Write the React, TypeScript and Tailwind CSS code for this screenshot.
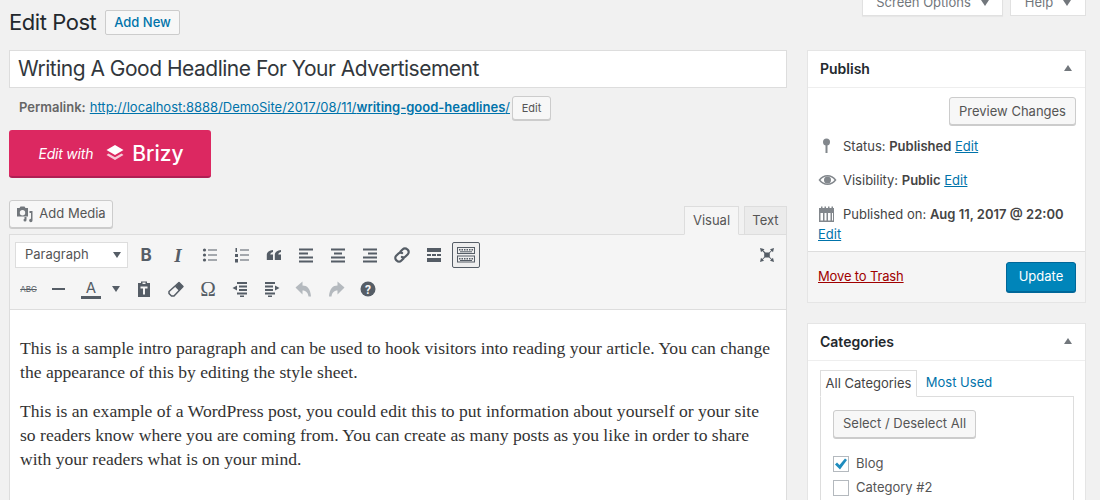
import type { ReactNode } from "react"

const ICON = "#555d66"

const Icon = ({ children, w = 20, h = 20, fill = ICON }: { children: ReactNode; w?: number; h?: number; fill?: string }) => (
	<svg width={w} height={h} viewBox={`0 0 ${w} ${h}`} fill={fill}>
		{children}
	</svg>
)

const ToolBtn = ({ children, className = "w-[32px]" }: { children: ReactNode; className?: string }) => (
	<div className={`flex h-[28px] shrink-0 items-center justify-center ${className}`}>{children}</div>
)

const Button = ({ children, className = "" }: { children: ReactNode; className?: string }) => (
	<div
		className={`flex h-[28px] shrink-0 items-center justify-center rounded-[3px] border border-[#cccccc] bg-[#f7f7f7] text-[13px] text-[#555555] shadow-[0_1px_0_#cccccc] ${className}`}
	>
		{children}
	</div>
)

const Lines = ({ rows }: { rows: [number, number][] }) => (
	<Icon>
		{rows.map(([x, w], i) => (
			<rect key={i} x={x} y={3.5 + i * 4} width={w} height={2} />
		))}
	</Icon>
)

const ToolbarRowOne = () => (
	<div className="flex h-[26px] items-center">
		<div className="mr-[2px] flex h-[26px] w-[113px] shrink-0 items-center justify-between border border-[#dddddd] bg-white pl-[9px] pr-[6px] text-[13px] text-[#555555]">
			<span>Paragraph</span>
			<span className="h-0 w-0 border-x-[4px] border-t-[6px] border-x-transparent border-t-[#555d66]" />
		</div>
		<ToolBtn>
			<span className="text-[17px] font-bold leading-none text-[#555d66]">B</span>
		</ToolBtn>
		<ToolBtn>
			<span className="font-['Liberation_Serif',serif] text-[19px] font-bold italic leading-none text-[#555d66]">I</span>
		</ToolBtn>
		<ToolBtn>
			<Icon>
				<circle cx="4.5" cy="5" r="1.6" />
				<circle cx="4.5" cy="10" r="1.6" />
				<circle cx="4.5" cy="15" r="1.6" />
				<rect x="8" y="4.5" width="9" height="1" />
				<rect x="8" y="9.5" width="9" height="1" />
				<rect x="8" y="14.5" width="9" height="1" />
			</Icon>
		</ToolBtn>
		<ToolBtn>
			<Icon>
				<rect x="3.5" y="3" width="1.5" height="4" />
				<rect x="3" y="9" width="3" height="3" />
				<rect x="3" y="14" width="3" height="3.5" />
				<rect x="8" y="4.5" width="9" height="1" />
				<rect x="8" y="9.5" width="9" height="1" />
				<rect x="8" y="14.5" width="9" height="1" />
			</Icon>
		</ToolBtn>
		<ToolBtn>
			<Icon>
				<path d="M9 5v2C6.8 7.6 6.3 8.6 6.3 9.5H9V15H2.8V10C2.8 7 5.5 5.2 9 5Z" />
				<path d="M17 5v2C14.8 7.6 14.3 8.6 14.3 9.5H17V15H10.8V10C10.8 7 13.5 5.2 17 5Z" />
			</Icon>
		</ToolBtn>
		<ToolBtn>
			<Lines rows={[[3, 14], [3, 9], [3, 14], [3, 14]]} />
		</ToolBtn>
		<ToolBtn>
			<Lines rows={[[3, 14], [6, 8], [3, 14], [3, 14]]} />
		</ToolBtn>
		<ToolBtn>
			<Lines rows={[[3, 14], [8, 9], [3, 14], [3, 14]]} />
		</ToolBtn>
		<ToolBtn>
			<Icon fill="none">
				<g stroke={ICON} strokeWidth="2.2" strokeLinecap="round">
					<path d="M8.5 6.5l2.3-2.3a3 3 0 0 1 4.3 0l.7.7a3 3 0 0 1 0 4.3l-2.3 2.3a3 3 0 0 1-3.6.5" />
					<path d="M11.5 13.5l-2.3 2.3a3 3 0 0 1-4.3 0l-.7-.7a3 3 0 0 1 0-4.3l2.3-2.3a3 3 0 0 1 3.6-.5" />
				</g>
			</Icon>
		</ToolBtn>
		<ToolBtn>
			<Icon>
				<rect x="3" y="3" width="14" height="4" />
				<rect x="3" y="9" width="4" height="2" />
				<rect x="8" y="9" width="4" height="2" />
				<rect x="13" y="9" width="4" height="2" />
				<rect x="3" y="13" width="14" height="4" />
			</Icon>
		</ToolBtn>
		<div className="ml-[2px] flex h-[26px] w-[28px] shrink-0 items-center justify-center rounded-[2px] border border-[#555d66] bg-[#eeeeee]">
			<Icon w={18} h={18}>
				<path fillRule="evenodd" d="M0 1h18v7H0ZM1 2v5h16V2ZM0 9.5h18v7H0ZM1 10.5v5h16v-5Z" />
				{[2, 4.5, 7, 9.5, 12, 14.5].map((x) => (
					<rect key={x} x={x} y="3" width="1.5" height="1.5" />
				))}
				{[2, 4.5, 7, 9.5, 12, 14.5].map((x) => (
					<rect key={x} x={x} y="12" width="1.5" height="1.5" />
				))}
				<rect x="3" y="5.3" width="12" height="1" />
				<rect x="3" y="14" width="12" height="1" />
			</Icon>
		</div>
		<div className="ml-auto mr-[9px] flex">
			<Icon>
				<path d="M3 3l4.500 1.200-1.200 1.200 2.200 2.200H12l2.200-2.200-1.200-1.200L17 3l-1 4.200-1.200-1.200L12.800 8v4l2 2 1.200-1.200 1 4.200-4-1.200 1.200-1.200-2.200-2.200H8l-2.200 2.200L7 15.800 3 17l1-4.200L5.200 14l2-2V8l-2-2L4 7.200Z" />
			</Icon>
		</div>
	</div>
)

const ToolbarRowTwo = () => (
	<div className="mt-[7px] flex h-[28px] items-center">
		<ToolBtn className="w-[27px]">
			<span className="text-[8px] leading-none text-[#555d66] line-through">ABC</span>
		</ToolBtn>
		<ToolBtn className="w-[32px]">
			<div className="h-[2px] w-[13px] bg-[#555d66]" />
		</ToolBtn>
		<ToolBtn className="w-[34px]">
			<div className="flex flex-col items-center">
				<span className="text-[15px] leading-[15px] text-[#555d66]">A</span>
				<div className="mt-[1px] h-[3px] w-[20px] bg-[#555d66]" />
			</div>
		</ToolBtn>
		<ToolBtn className="w-[20px] !justify-start pl-[4px]">
			<span className="h-0 w-0 border-x-[4px] border-t-[6px] border-x-transparent border-t-[#555d66]" />
		</ToolBtn>
		<ToolBtn className="w-[32px]">
			<Icon>
				<path d="M7 2.500h6V4h3v14H4V4h3ZM8.500 3.500v1.500h3V3.500ZM6.500 7.500v2h2.500v6h2v-6h2.500v-2Z" fillRule="evenodd" />
			</Icon>
		</ToolBtn>
		<ToolBtn className="w-[32px]">
			<Icon fill="none">
				<path d="M13 3.500l4 4-9 9.500H5.500l-2.500-2.500v-2Z" stroke={ICON} strokeWidth="1.500" strokeLinejoin="round" />
				<path d="M13 3.500l4 4-4 4.300-4-4Z" fill={ICON} />
			</Icon>
		</ToolBtn>
		<ToolBtn className="w-[32px]">
			<span className="font-['Liberation_Serif',serif] text-[21px] leading-none text-[#555d66]">Ω</span>
		</ToolBtn>
		<ToolBtn className="w-[32px]">
			<Icon>
				<rect x="7" y="3" width="10" height="2" />
				<rect x="9" y="6.500" width="8" height="2" />
				<rect x="9" y="10" width="8" height="2" />
				<rect x="7" y="13.500" width="10" height="2" />
				<rect x="10" y="16.500" width="4" height="1.500" />
				<path d="M7 6.500v5L2.500 9Z" />
			</Icon>
		</ToolBtn>
		<ToolBtn className="w-[32px]">
			<Icon>
				<rect x="3" y="3" width="10" height="2" />
				<rect x="3" y="6.500" width="8" height="2" />
				<rect x="3" y="10" width="8" height="2" />
				<rect x="3" y="13.500" width="10" height="2" />
				<rect x="6" y="16.500" width="4" height="1.500" />
				<path d="M13 6.500v5L17.500 9Z" />
			</Icon>
		</ToolBtn>
		<ToolBtn className="w-[32px]">
			<Icon fill="#b4b9be">
				<path d="M8.500 2.500v4c4.500 0 8 3 8.500 11h-2.500c-.5-3.500-2.300-6-6-6v4L1.500 8.500Z" />
			</Icon>
		</ToolBtn>
		<ToolBtn className="w-[32px]">
			<Icon fill="#b4b9be">
				<path d="M11.500 2.500v4c-4.500 0-8 3-8.500 11h2.500c.5-3.500 2.300-6 6-6v4l7-7Z" />
			</Icon>
		</ToolBtn>
		<ToolBtn className="w-[32px]">
			<Icon>
				<circle cx="10" cy="10" r="7.500" />
				<text x="10" y="14.500" textAnchor="middle" fontSize="12" fontWeight="700" fill="#f5f5f5" fontFamily="Roboto, sans-serif">
					?
				</text>
			</Icon>
		</ToolBtn>
	</div>
)

const Editor = () => (
	<div>
		<div className="flex items-end">
			<Button className="mb-[6px] w-[104px] gap-[5px] text-[13px]">
				<Icon w={18} h={18} fill="#72777c">
					<path fillRule="evenodd" d="M1 3h2.500l1-1.500h4l1 1.500H12v8.500H1Zm5.500 2a2.700 2.700 0 1 0 0 5.400 2.700 2.700 0 0 0 0-5.400Z" />
					<path d="M13.500 6h3v9.500a1.700 1.700 0 1 1-1.500-1.700V8h-1.500ZM8.500 12h2v3a1.500 1.500 0 1 1-1.500-1.500h-.5Z" />
				</Icon>
				Add Media
			</Button>
			<div className="z-10 -mb-px ml-auto mr-[5px] flex h-[29px] w-[55px] items-center justify-center border border-[#dddddd] border-b-[#f5f5f5] bg-[#f5f5f5] text-[13px] text-[#555555]">
				Visual
			</div>
			<div className="flex h-[28px] w-[43px] items-center justify-center border border-b-0 border-[#dddddd] bg-[#ebebeb] text-[13px] text-[#555555]">
				Text
			</div>
		</div>
		<div className="border border-[#dddddd] bg-white">
			<div className="border-b border-[#dddddd] bg-[#f5f5f5] pb-[6px] pl-[5px] pt-[7px]">
				<ToolbarRowOne />
				<ToolbarRowTwo />
			</div>
			<div className="h-[200px] pl-[10px] pr-[8px] pt-[26px] font-['Liberation_Serif',serif] text-[17.600px] leading-[24px] text-[#333333]">
				<p>
					This is a sample intro paragraph and can be used to hook visitors into reading your article. You can change
					<br />
					the appearance of this by editing the style sheet.
				</p>
				<p className="mt-[15px]">
					This is an example of a WordPress post, you could edit this to put information about yourself or your site
					<br />
					so readers know where you are coming from. You can create as many posts as you like in order to share
					<br />
					with your readers what is on your mind.
				</p>
				<p className="mt-[25px]">Remember that you can also add images and other media to your post.</p>
			</div>
		</div>
	</div>
)

const Caret = () => <span className="h-0 w-0 border-x-[4px] border-b-[6px] border-x-transparent border-b-[#72777c]" />

const PanelHeader = ({ title }: { title: string }) => (
	<div className="flex h-[37px] items-center justify-between border-b border-[#eeeeee] pb-[2px] pl-[12px] pr-[13px] text-[14px] font-semibold text-[#23282d]">
		<span>{title}</span>
		<Caret />
	</div>
)

const EditLink = () => <span className="text-[#0073aa] underline">Edit</span>

const Publish = () => (
	<div className="border border-[#e5e5e5] bg-white">
		<PanelHeader title="Publish" />
		<div className="h-[163px] pl-[10px] pr-[9px] pt-[9px] text-[13px] leading-[20px] text-[#444444]">
			<div className="flex justify-end">
				<Button className="w-[127px] text-[#555555]">Preview Changes</Button>
			</div>
			<div className="mt-[11px] flex h-[20px] items-center gap-[8px]">
				<Icon w={17} h={20} fill="#82878c">
					<circle cx="8.500" cy="6" r="3.500" />
					<rect x="7.500" y="8" width="2" height="9" />
				</Icon>
				<span>
					Status: <b className="font-semibold">Published</b> <EditLink />
				</span>
			</div>
			<div className="mt-[14px] flex h-[20px] items-center gap-[6px]">
				<Icon w={19} h={20} fill="#82878c">
					<path
						fillRule="evenodd"
						d="M.5 10C3 6.500 6 5 9.500 5s6.500 1.500 9 5c-2.500 3.500-5.500 5-9 5s-6.500-1.500-9-5Zm2 0c1.800 2.200 4 3.500 7 3.500s5.200-1.300 7-3.500c-1.800-2.200-4-3.500-7-3.500s-5.200 1.300-7 3.500Z"
					/>
					<circle cx="9.500" cy="10" r="3.500" />
				</Icon>
				<span>
					Visibility: <b className="font-semibold">Public</b> <EditLink />
				</span>
			</div>
			<div className="mt-[14px] flex h-[20px] items-center gap-[8px]">
				<Icon w={17} h={20} fill="#82878c">
					<path
						fillRule="evenodd"
						d="M1 4h2V2.500h1.500V4h2V2.500H8V4h2V2.500h1.500V4h2V2.500H15V4h1v14H1Zm1.500 4.500V16.500H5V9H2.500ZM6.500 9v7.500h2V9ZM10 9v7.500h2.500V9ZM14 9v7.500h1V9Z"
					/>
				</Icon>
				<span>
					Published on: <b className="font-semibold">Aug 11, 2017 @ 22:00</b>
				</span>
			</div>
			<div>
				<EditLink />
			</div>
		</div>
		<div className="flex h-[51px] items-center justify-between border-t border-[#dddddd] bg-[#f5f5f5] pl-[10px] pr-[9px]">
			<span className="text-[13px] tracking-[-0.15px] text-[#a00000] underline">Move to Trash</span>
			<div className="flex h-[30px] w-[70px] items-center justify-center rounded-[3px] border border-[#006799] bg-[#0085ba] text-[13px] text-white shadow-[0_1px_0_#006799]">
				Update
			</div>
		</div>
	</div>
)

const Checkbox = ({ checked, label }: { checked?: boolean; label: string }) => (
	<div className="flex h-[24px] items-center gap-[7px] text-[13px] text-[#555555]">
		<div className="flex h-[16px] w-[16px] items-center justify-center border border-[#b4b9be] bg-white">
			{checked && (
				<svg width="14" height="14" viewBox="0 0 14 14" fill="#1e8cbe">
					<path d="M1 7.500l2-2 2.500 2.500L11 1.500l2 1.500L6 12.500Z" />
				</svg>
			)}
		</div>
		<span>{label}</span>
	</div>
)

const Categories = () => (
	<div className="mt-[20px] border border-[#e5e5e5] bg-white">
		<PanelHeader title="Categories" />
		<div className="pl-[12px] pr-[11px] pt-[9px]">
			<div className="flex text-[13px]">
				<div className="z-10 -mb-px flex h-[27px] w-[97px] items-center justify-center border border-[#dddddd] border-b-white bg-white text-[#444444]">
					All Categories
				</div>
				<div className="flex h-[26px] w-[84px] items-center justify-center text-[#0073aa]">Most Used</div>
			</div>
			<div className="border border-[#dddddd] bg-white px-[12px] pb-[20px] pt-[13px]">
				<Button className="w-[143px]">Select / Deselect All</Button>
				<div className="mt-[14px]">
					<Checkbox checked label="Blog" />
					<Checkbox label="Category #2" />
				</div>
			</div>
		</div>
	</div>
)

const App = () => (
	<div className="flex h-[500px] w-[1100px] gap-[20px] overflow-hidden bg-[#f1f1f1] pl-[9px] font-['Inter',sans-serif]">
		<div className="w-[778px] shrink-0">
			<div className="flex h-[50px] items-start">
				<h1 className="mt-[8px] w-[89px] shrink-0 whitespace-nowrap text-[22px] leading-[29px] tracking-[-0.45px] text-[#23282d]">Edit Post</h1>
				<div className="ml-[7px] mt-[10px] flex h-[25px] w-[75px] items-center justify-center rounded-[2px] border border-[#cccccc] bg-[#f7f7f7] text-[13px] font-medium text-[#0073aa]">
					Add New
				</div>
			</div>
			<div className="flex h-[38px] items-center border border-[#dddddd] bg-white pb-[1px] pl-[8px] pt-[1px] text-[21px] tracking-[-0.5px] text-[#32373c]">
				Writing A Good Headline For Your Advertisement
			</div>
			<div className="mt-[7px] flex h-[26px] items-center pl-[10px] text-[13px] text-[#666666]">
				<b className="font-semibold">Permalink:</b>
				<span className="ml-[4px] text-[#0073aa] underline">
					http://localhost:8888/DemoSite/2017/08/11/<b className="font-semibold">writing-good-headlines</b>/
				</span>
				<div className="ml-[2px] flex h-[24px] w-[39px] items-center justify-center rounded-[3px] border border-[#cccccc] bg-[#f7f7f7] text-[11px] text-[#555555] shadow-[0_1px_0_#cccccc]">
					Edit
				</div>
			</div>
			<div className="mt-[9px] flex h-[48px] w-[202px] items-center justify-center gap-[12px] rounded-[3px] border-b-2 border-[#b01f54] bg-[#dc2861] pl-[2px] text-white">
				<span className="text-[14px] italic tracking-[-0.2px]">Edit with</span>
				<span className="flex items-center gap-[7px]">
					<svg width="20" height="19" viewBox="0 0 19 19" fill="#ffffff">
						<path d="M9.500 1l8.500 5-8.500 5L1 6Z" />
						<path d="M3 9.500l6.500 3.800L16 9.500l2 1.500-8.500 5L1 11Z" opacity="0.75" />
					</svg>
					<span className="text-[21px] font-medium leading-none">Brizy</span>
				</span>
			</div>
			<div className="mt-[22px]">
				<Editor />
			</div>
		</div>
		<div className="w-[279px] shrink-0">
			<div className="-mt-[10px] mb-[34px] flex h-[26px] justify-end gap-[7px]">
				<div className="flex h-[26px] w-[141px] items-center justify-center gap-[10px] border border-t-0 border-[#e1e1e1] bg-white text-[13px] text-[#72777c] shadow-[0_1px_1px_rgba(0,0,0,0.04)]">
					Screen Options
					<span className="h-0 w-0 border-x-[4px] border-t-[6px] border-x-transparent border-t-[#72777c]" />
				</div>
				<div className="flex h-[26px] w-[76px] items-center justify-center gap-[10px] border border-t-0 border-[#e1e1e1] bg-white text-[13px] text-[#72777c]">
					Help
					<span className="h-0 w-0 border-x-[4px] border-t-[6px] border-x-transparent border-t-[#72777c]" />
				</div>
			</div>
			<Publish />
			<Categories />
		</div>
	</div>
)

export default App
